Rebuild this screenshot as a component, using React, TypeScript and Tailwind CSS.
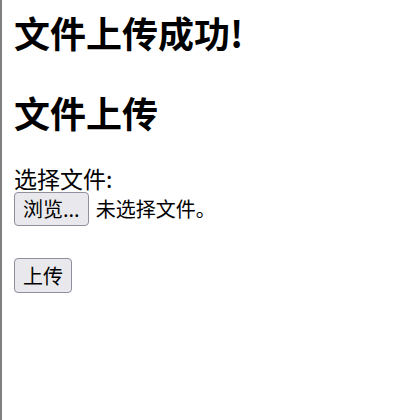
const cjk = "font-['Microsoft_YaHei','Noto_Sans_CJK_SC',sans-serif]";

function FileField() {
  return (
    <div className="mt-px flex items-center gap-[7px]">
      <button
        type="button"
        className="h-[34px] rounded-[4px] border border-[#8f8f9d] bg-[#e9e9ed] px-[8px] text-[20px] leading-none text-black"
      >
        浏览...
      </button>
      <span className="text-[20px] leading-none text-black">未选择文件。</span>
    </div>
  );
}

export default function App() {
  return (
    <div className={`${cjk} min-h-[420px] border-l-2 border-[#7f7f7f] bg-white pl-3 text-black`}>
      <h1 className="pt-[12px] text-[36px] font-bold leading-[40px]">文件上传成功!</h1>
      <h1 className="mt-[40px] text-[36px] font-bold leading-[40px]">文件上传</h1>
      <form className="mt-[33px]">
        <label className="block text-[23px] leading-[26px]">选择文件:</label>
        <FileField />
        <button
          type="submit"
          className="mt-[32px] h-[35px] rounded-[4px] border border-[#8f8f9d] bg-[#e9e9ed] px-[8px] text-[20px] leading-none text-black"
        >
          上传
        </button>
      </form>
    </div>
  );
}
